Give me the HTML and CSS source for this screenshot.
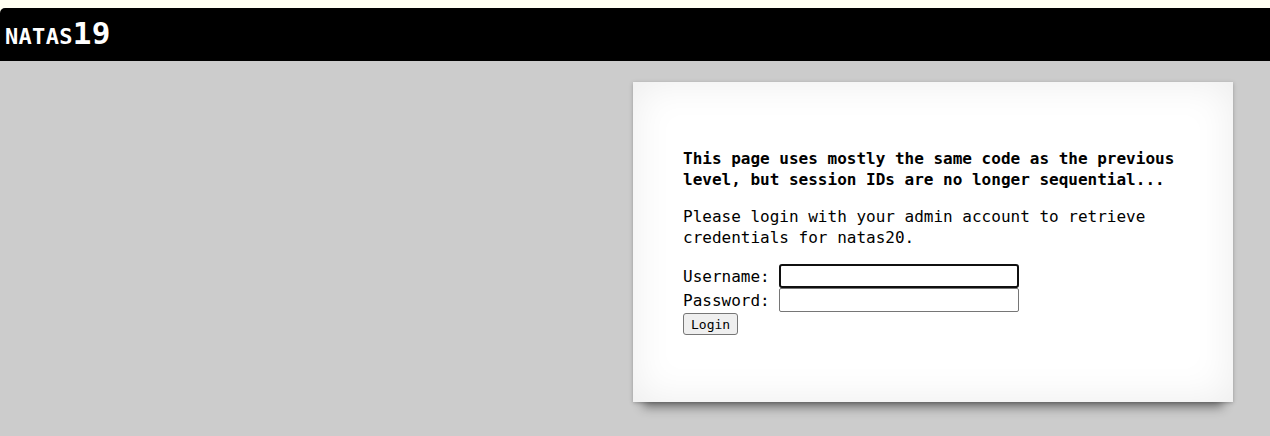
FILE: index.html
```html
<!DOCTYPE html>
<html>
<head>
<meta charset="utf-8">
<title>natas19</title>
<link rel="stylesheet" href="styles.css">
</head>
<body>
<header class="topbar">
  <h1 class="title">natas19</h1>
</header>
<main class="stage">
  <section class="card">
    <p class="lead">This page uses mostly the same code as the previous level, but session IDs are no longer sequential...</p>
    <p class="note">Please login with your admin account to retrieve credentials for natas20.</p>
    <form class="login">
      <div class="row">
        <label class="label" for="u">Username:</label>
        <input class="field field-focus" id="u" type="text">
      </div>
      <div class="row">
        <label class="label" for="p">Password:</label>
        <input class="field" id="p" type="password">
      </div>
      <div class="row-btn">
        <button class="btn" type="button">Login</button>
      </div>
    </form>
  </section>
</main>
</body>
</html>
```

FILE: styles.css
```css
html, body {
  margin: 0;
  padding: 0;
}
body {
  background: #fffff2;
  font-family: "DejaVu Sans Mono", "Liberation Mono", monospace;
  height: 436px;
  overflow: hidden;
  display: flex;
  flex-direction: column;
}
.topbar {
  margin-top: 8px;
  height: 53px;
  background: #000;
  border-top-left-radius: 5px;
  display: flex;
  align-items: center;
  padding: 0 0 3px 5px;
  box-sizing: border-box;
}
.title {
  margin: 0;
  color: #fff;
  font-size: 31px;
  font-weight: bold;
  font-variant: small-caps;
  letter-spacing: 0.3px;
  line-height: 1;
}
.stage {
  flex: 1;
  background: #cccccc;
  display: flex;
  justify-content: flex-end;
  align-items: flex-start;
  padding: 21px 37px 0 0;
}
.card {
  width: 500px;
  padding: 50px;
  background: #fff;
  color: #000;
  font-size: 16px;
  line-height: 21px;
  box-shadow: 0 15px 10px -10px rgba(0,0,0,0.45), 0 1px 4px rgba(0,0,0,0.25), 0 0 40px rgba(0,0,0,0.08) inset;
}
.lead {
  margin: 16px 0;
  font-weight: bold;
}
.note {
  margin: 16px 0;
}
.login {
  margin: 16px 0 17px;
}
.row {
  display: flex;
  align-items: center;
  height: 24px;
}
.label {
  width: 96px;
}
.field {
  width: 240px;
  height: 24px;
  box-sizing: border-box;
  border: 1px solid #767676;
  border-radius: 2px;
  background: #fff;
  padding: 1px 2px;
  margin: 0;
  font: 13px "DejaVu Sans Mono", monospace;
}
.field-focus {
  border: 2px solid #101010;
  border-radius: 3px;
}
.row-btn {
  display: flex;
  margin-top: 1px;
}
.btn {
  height: 22px;
  padding: 1px 7px;
  box-sizing: border-box;
  border: 1px solid #767676;
  border-radius: 3px;
  background: #efefef;
  color: #000;
  font: 13px "DejaVu Sans Mono", monospace;
  margin: 0;
}
```
